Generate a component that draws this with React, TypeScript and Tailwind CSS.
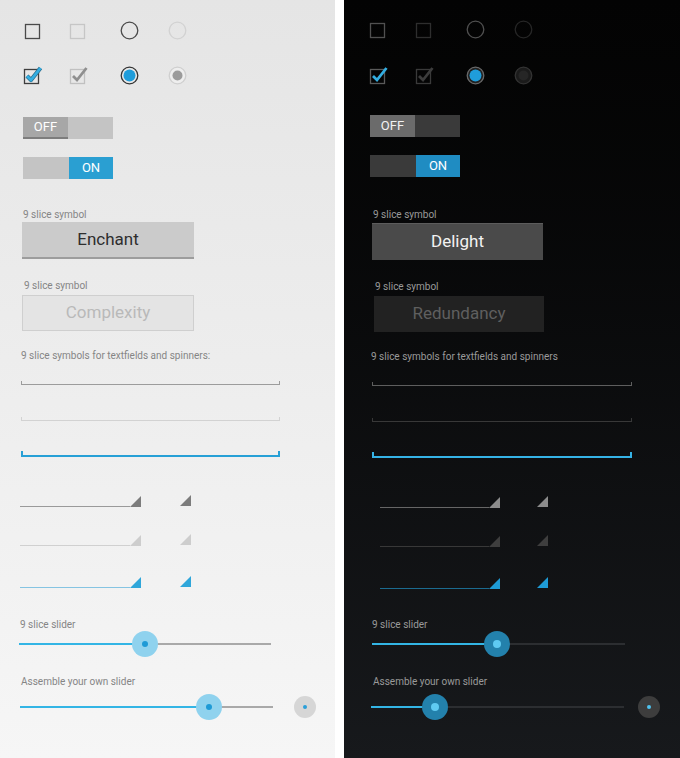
import React from "react";

type Theme = { dark: boolean };

function Box({ stroke, check, checkStroke }: { stroke: string; check?: string; checkStroke?: string }) {
  return (
    <svg width="20" height="20" viewBox="0 0 20 20" className="block">
      <rect x="1.5" y="4.5" width="14" height="14" fill="none" stroke={stroke} strokeWidth="1.3" />
      {check && (
        <>
          {checkStroke && (
            <path d="M4 11 L8 15 L17.5 3" fill="none" stroke={checkStroke} strokeWidth="4.2" strokeLinejoin="round" />
          )}
          <path d="M4 11 L8 15 L17.5 3" fill="none" stroke={check} strokeWidth="2.8" strokeLinejoin="miter" />
        </>
      )}
    </svg>
  );
}

function Radio({ ring, fill, dot, dotR }: { ring: string; fill?: string; dot?: string; dotR?: number }) {
  return (
    <svg width="19" height="19" viewBox="0 0 19 19" className="block">
      <circle cx="9.5" cy="9.5" r="8.3" fill={fill ?? "none"} stroke={ring} strokeWidth="1.3" />
      {dot && <circle cx="9.5" cy="9.5" r={dotR ?? 6} fill={dot} />}
    </svg>
  );
}

function Tri({ color }: { color: string }) {
  return (
    <svg width="11" height="11" viewBox="0 0 11 11" className="block shrink-0">
      <polygon points="0,11 11,0 11,11" fill={color} />
    </svg>
  );
}

function Slider({
  pct,
  track,
  fill,
  thumb,
  dot,
  dotR,
  widthClass,
}: {
  pct: number;
  track: string;
  fill: string;
  thumb: string;
  dot: string;
  dotR: string;
  widthClass: string;
}) {
  return (
    <div className={`relative h-[26px] ${widthClass}`}>
      <div className={`absolute left-0 right-0 top-[12px] h-[2px] ${track}`} />
      <div className={`absolute left-0 top-[12px] h-[2px] ${fill}`} style={{ width: `${pct}%` }} />
      <div
        className={`absolute top-0 -ml-[13px] flex h-[26px] w-[26px] items-center justify-center rounded-full ${thumb}`}
        style={{ left: `${pct}%` }}
      >
        <div className={`rounded-full ${dot} ${dotR}`} />
      </div>
    </div>
  );
}

function Panel({ dark }: Theme) {
  const label = dark ? "text-[#9a9a9a]" : "text-[#858585]";
  return (
    <div
      className={
        dark
          ? "flex h-full flex-1 flex-col bg-linear-to-b from-[#030303] to-[#17191c]"
          : "flex h-full w-[335px] flex-col bg-linear-to-b from-[#e5e5e5] to-[#f6f6f6]"
      }
      style={{ fontFamily: "Roboto, 'Noto Sans', sans-serif" }}
    >
      {/* Row 1 */}
      <div className={dark ? "mt-[19px] flex h-[20px] items-center pl-[25px]" : "mt-[20px] flex h-[20px] items-center pl-[24px]"}>
        <Box stroke={dark ? "#505050" : "#4a4a4a"} />
        <div className={dark ? "ml-[26px]" : "ml-[25px]"}>
          <Box stroke={dark ? "#2e2e2e" : "#c6c6c6"} />
        </div>
        <div className="ml-[31px]">
          <Radio ring={dark ? "#4f4f4f" : "#4a4a4a"} />
        </div>
        <div className="ml-[29px]">
          <Radio ring={dark ? "#262626" : "#d2d2d2"} />
        </div>
      </div>
      {/* Row 2 */}
      <div className={dark ? "mt-[26px] flex h-[20px] items-center pl-[25px]" : "mt-[25px] flex h-[20px] items-center pl-[23px]"}>
        <Box stroke={dark ? "#5a5a5a" : "#3e3e3e"} check="#33aee2" checkStroke={dark ? undefined : "#2c6f8f"} />
        <div className="ml-[26px]">
          <Box stroke={dark ? "#3a3a3a" : "#c0c0c0"} check={dark ? "#3c3c3c" : "#8f8f8f"} />
        </div>
        <div className="ml-[31px]">
          <Radio ring={dark ? "#6a6a6a" : "#333333"} fill={dark ? "#202020" : "#e8e8e8"} dot="#1f9ddb" dotR={6} />
        </div>
        <div className="ml-[29px]">
          <Radio ring={dark ? "#333333" : "#cfcfcf"} fill={dark ? "#1b1b1b" : "#eeeeee"} dot={dark ? "#262626" : "#9b9b9b"} dotR={5} />
        </div>
      </div>
      {/* Toggle off */}
      <div
        className={
          dark
            ? "ml-[26px] mt-[30px] flex h-[22px] w-[90px] bg-[#3a3a3a]"
            : "ml-[23px] mt-[32px] flex h-[22px] w-[90px] bg-[#c4c4c4]"
        }
      >
        <div
          className={
            dark
              ? "flex h-full w-[45px] items-center justify-center bg-[#6b6b6b] text-[13px] text-[#f2f2f2]"
              : "flex h-full w-[45px] items-center justify-center border-b-2 border-[#7d7d7d] bg-[#a7a7a7] text-[13px] text-white"
          }
        >
          OFF
        </div>
      </div>
      {/* Toggle on */}
      <div
        className={
          dark
            ? "ml-[26px] mt-[18px] flex h-[22px] w-[90px] justify-end bg-[#3a3a3a]"
            : "ml-[23px] mt-[18px] flex h-[22px] w-[90px] justify-end bg-[#c4c4c4]"
        }
      >
        <div
          className={
            dark
              ? "flex h-full w-[44px] items-center justify-center bg-[#1f8cc2] text-[13px] text-white"
              : "flex h-full w-[44px] items-center justify-center bg-[#2a9fd2] text-[13px] text-white"
          }
        >
          ON
        </div>
      </div>
      {/* Label 1 */}
      <div className={`h-[12px] text-[10px] leading-[12px] ${label} ${dark ? "ml-[29px] mt-[32px]" : "ml-[23px] mt-[30px]"}`}>9 slice symbol</div>
      {/* Button 1 */}
      <div
        className={
          dark
            ? "ml-[28px] mt-[2px] flex h-[37px] w-[171px] items-center justify-center border-t border-[#5c5c5c] bg-[#4a4a4a] text-[17px] text-[#f2f2f2]"
            : "ml-[22px] mt-[1px] flex h-[37px] w-[172px] items-center justify-center border-b-2 border-[#9d9d9d] bg-[#cbcbcb] text-[17px] text-[#2e2e2e]"
        }
      >
        {dark ? "Delight" : "Enchant"}
      </div>
      {/* Label 2 */}
      <div className={`mt-[21px] h-[12px] text-[10px] leading-[12px] ${label} ${dark ? "ml-[31px]" : "ml-[24px]"}`}>9 slice symbol</div>
      {/* Button 2 */}
      <div
        className={
          dark
            ? "ml-[30px] mt-[3px] flex h-[36px] w-[170px] items-center justify-center bg-[#222222] text-[17px] text-[#5f5f5f]"
            : "ml-[22px] mt-[3px] flex h-[36px] w-[172px] items-center justify-center border border-[#cfcfcf] bg-[#e4e4e4] text-[17px] text-[#b9b9b9]"
        }
      >
        {dark ? "Redundancy" : "Complexity"}
      </div>
      {/* Label 3 */}
      <div className={`mt-[19px] h-[12px] text-[10px] leading-[12px] ${label} ${dark ? "ml-[27px]" : "ml-[21px]"}`}>
        {dark ? "9 slice symbols for textfields and spinners" : "9 slice symbols for textfields and spinners:"}
      </div>
      {/* Textfields */}
      <div
        className={
          dark
            ? "ml-[28px] mt-[19px] h-[4px] w-[260px] border-x border-b border-[#5e5e5e]"
            : "ml-[21px] mt-[19px] h-[4px] w-[259px] border-x border-b border-[#9c9c9c]"
        }
      />
      <div
        className={
          dark
            ? "ml-[28px] mt-[32px] h-[4px] w-[260px] border-x border-b border-[#383838]"
            : "ml-[21px] mt-[32px] h-[4px] w-[259px] border-x border-b border-[#d2d2d2]"
        }
      />
      <div
        className={
          dark
            ? "ml-[28px] mt-[30px] h-[6px] w-[260px] border-x-2 border-b-2 border-[#35b3e6]"
            : "ml-[21px] mt-[30px] h-[6px] w-[259px] border-x-2 border-b-2 border-[#27a0d6]"
        }
      />
      {/* Spinners */}
      {[
        {
          mt: "mt-[38px]",
          line: dark ? "bg-[#666666]" : "bg-[#9a9a9a]",
          tri: dark ? "#8c8c8c" : "#7c7c7c",
        },
        {
          mt: "mt-[27px]",
          line: dark ? "bg-[#383838]" : "bg-[#d0d0d0]",
          tri: dark ? "#3e3e3e" : "#cdcdcd",
        },
        {
          mt: "mt-[30px]",
          line: dark ? "bg-[#1b6b90]" : "bg-[#85c4e2]",
          tri: dark ? "#1e9bd6" : "#2fa6da",
        },
      ].map((r, i) => (
        <div key={i} className={`flex h-[12px] items-end ${r.mt} ${dark ? "ml-[36px]" : "ml-[20px]"}`}>
          <div className={`flex items-end ${dark ? "w-[120px]" : "w-[121px]"}`}>
            <div className={`h-px flex-1 ${r.line}`} />
            <Tri color={r.tri} />
          </div>
          <div className={`mb-[1px] ${dark ? "ml-[37px]" : "ml-[39px]"}`}>
            <Tri color={r.tri} />
          </div>
        </div>
      ))}
      {/* Slider 1 */}
      <div className={`h-[12px] text-[10px] leading-[12px] ${label} ${dark ? "ml-[28px] mt-[30px]" : "ml-[20px] mt-[31px]"}`}>9 slice slider</div>
      <div className={dark ? "ml-[28px]" : "ml-[19px]"}>
        <Slider
          pct={dark ? 49.4 : 50}
          track={dark ? "bg-[#2c2e31]" : "bg-[#a9a9a9]"}
          fill="bg-[#33b5e5]"
          thumb={dark ? "bg-[#2381ac]" : "bg-[#8fd2ee]"}
          dot={dark ? "bg-[#5fcaf2]" : "bg-[#1e9ad6]"}
          dotR={dark ? "h-[8px] w-[8px]" : "h-[6px] w-[6px]"}
          widthClass={dark ? "w-[253px]" : "w-[252px]"}
        />
      </div>
      {/* Slider 2 */}
      <div className={`mt-[19px] h-[12px] text-[10px] leading-[12px] ${label} ${dark ? "ml-[29px]" : "ml-[21px]"}`}>Assemble your own slider</div>
      <div className={`mt-[6px] flex items-center ${dark ? "ml-[27px]" : "ml-[20px]"}`}>
        <Slider
          pct={dark ? 25.3 : 74.7}
          track={dark ? "bg-[#2c2e31]" : "bg-[#a9a9a9]"}
          fill="bg-[#33b5e5]"
          thumb={dark ? "bg-[#2381ac]" : "bg-[#8fd2ee]"}
          dot={dark ? "bg-[#5fcaf2]" : "bg-[#1e9ad6]"}
          dotR={dark ? "h-[8px] w-[8px]" : "h-[6px] w-[6px]"}
          widthClass="w-[253px]"
        />
        <div
          className={
            dark
              ? "ml-[14px] flex h-[22px] w-[22px] items-center justify-center rounded-full bg-[#3d3d3d]"
              : "ml-[21px] flex h-[22px] w-[22px] items-center justify-center rounded-full bg-[#d6d6d6]"
          }
        >
          <div className={dark ? "h-[4px] w-[4px] rounded-full bg-[#4fc3f0]" : "h-[4px] w-[4px] rounded-full bg-[#2a9fd8]"} />
        </div>
      </div>
    </div>
  );
}

export default function App() {
  return (
    <div className="flex h-[758px] w-[680px] bg-white">
      <Panel dark={false} />
      <div className="w-[9px] bg-white" />
      <Panel dark={true} />
    </div>
  );
}
